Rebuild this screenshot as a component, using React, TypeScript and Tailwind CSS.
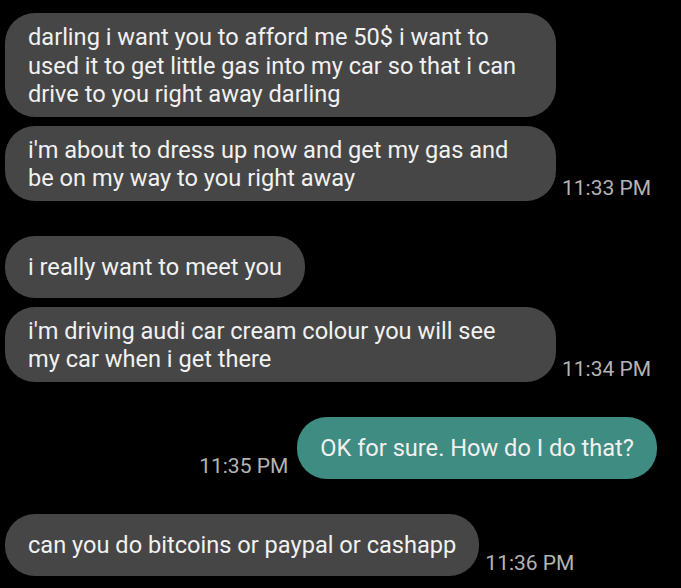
import React from 'react';

type Msg = {
  lines: string[];
  time?: string;
  mine?: boolean;
  wide?: boolean;
};

type Group = { msgs: Msg[] };

const groups: Group[] = [
  {
    msgs: [
      {
        lines: [
          'darling i want you to afford me 50$ i want to',
          'used it to get little gas into my car so that i can',
          'drive to you right away darling',
        ],
        wide: true,
      },
      {
        lines: ["i'm about to dress up now and get my gas and", 'be on my way to you right away'],
        time: '11:33 PM',
        wide: true,
      },
    ],
  },
  {
    msgs: [
      { lines: ['i really want to meet you'] },
      {
        lines: ["i'm driving audi car cream colour you will see", 'my car when i get there'],
        time: '11:34 PM',
        wide: true,
      },
    ],
  },
  { msgs: [{ lines: ['OK for sure. How do I do that?'], time: '11:35 PM', mine: true }] },
  { msgs: [{ lines: ['can you do bitcoins or paypal or cashapp'], time: '11:36 PM' }] },
];

function Time({ t }: { t: string }) {
  return <span className="shrink-0 text-[21px] leading-[26px] text-[#b4b4b4]">{t}</span>;
}

function Bubble({ m }: { m: Msg }) {
  return (
    <div
      className={
        (m.mine ? 'bg-[#3f8c82] ' : 'bg-[#464646] ') +
        (m.wide ? 'w-[551px] ' : '') +
        'flex min-h-[62px] flex-col justify-center rounded-[30px] px-[23px] pt-[10px] pb-[8px] text-[23.6px] leading-[28.5px] text-[#f1f1f1]'
      }
    >
      {m.lines.map((l, i) => (
        <div key={i} className="whitespace-nowrap">
          {l}
        </div>
      ))}
    </div>
  );
}

export default function App() {
  return (
    <div
      className="flex h-[588px] w-[681px] flex-col gap-[35px] overflow-hidden bg-black pt-[13px]"
      style={{ fontFamily: 'Roboto, "Noto Sans", sans-serif' }}
    >
      {groups.map((g, gi) => (
        <div key={gi} className="flex flex-col gap-[9px]">
          {g.msgs.map((m, mi) =>
            m.mine ? (
              <div key={mi} className="flex items-end justify-end gap-[9px] pr-[24px]">
                {m.time && <Time t={m.time} />}
                <Bubble m={m} />
              </div>
            ) : (
              <div key={mi} className="flex items-end gap-[6px] pl-[5px]">
                <Bubble m={m} />
                {m.time && <Time t={m.time} />}
              </div>
            ),
          )}
        </div>
      ))}
    </div>
  );
}
